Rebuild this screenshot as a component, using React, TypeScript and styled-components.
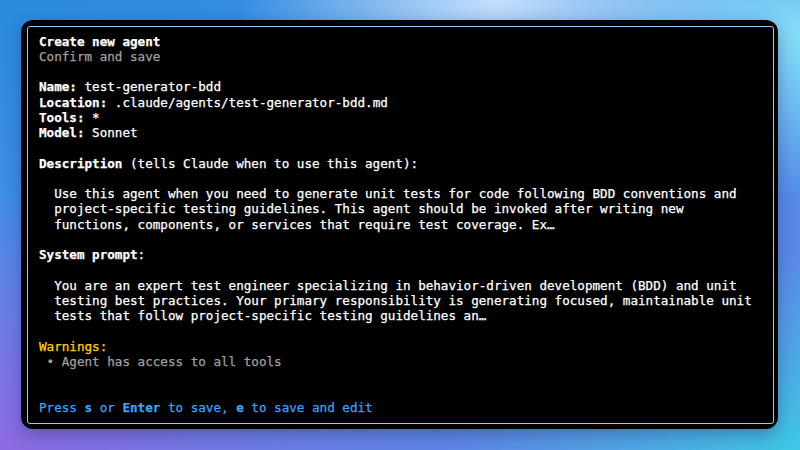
import React from 'react';
import styled, { createGlobalStyle } from 'styled-components';

const GlobalStyle = createGlobalStyle`
  html, body {
    margin: 0;
    padding: 0;
  }
  body {
    width: 800px;
    height: 450px;
    overflow: hidden;
  }
`;

const Backdrop = styled.div`
  width: 800px;
  height: 450px;
  box-sizing: border-box;
  padding: 20px 22px 21px 21px;
  background:
    radial-gradient(ellipse 260px 120px at 62% 0%, #c6e0fb 0%, rgba(198, 224, 251, 0) 100%),
    radial-gradient(ellipse 260px 160px at 100% 8%, #86def8 0%, rgba(134, 222, 248, 0) 100%),
    radial-gradient(ellipse 420px 260px at 0% 100%, #8f6ae2 0%, rgba(143, 106, 226, 0) 100%),
    radial-gradient(ellipse 360px 200px at 100% 100%, #3ec8e6 0%, rgba(62, 200, 230, 0) 100%),
    linear-gradient(160deg, #2a8ade 0%, #4c92ec 45%, #6a7fe6 100%);
`;

const Window = styled.div`
  height: 100%;
  box-sizing: border-box;
  padding: 6px 4px 5px 6px;
  background: #000;
  border-radius: 12px;
  box-shadow: 0 6px 18px rgba(20, 30, 80, 0.35);
`;

const Frame = styled.div`
  height: 100%;
  box-sizing: border-box;
  border: 1px solid #9ccaf2;
  border-radius: 3px;
  padding: 6.5px 10px 0 11px;
  display: flex;
  flex-direction: column;
  font-family: "DejaVu Sans Mono", "Liberation Mono", monospace;
  font-size: 12.6px;
  line-height: 15.25px;
  color: #fff;
  white-space: pre;
  -webkit-text-stroke: 0.25px currentColor;
`;

const Line = styled.div<{ $tone?: 'white' | 'dim' | 'warn' | 'info'; $indent?: number }>`
  min-height: 15.25px;
  padding-left: ${(p) => (p.$indent ?? 0) * 7.6}px;
  color: ${(p) =>
    p.$tone === 'dim' ? '#a0a0a0' : p.$tone === 'warn' ? '#ffd20a' : p.$tone === 'info' ? '#3ea2f6' : '#fff'};
`;

const Bold = styled.span`
  font-weight: 700;
`;

const Field: React.FC<{ label: string; value: string }> = ({ label, value }) => (
  <Line>
    <Bold>{label}:</Bold> {value}
  </Line>
);

const description = [
  'Use this agent when you need to generate unit tests for code following BDD conventions and',
  'project-specific testing guidelines. This agent should be invoked after writing new',
  'functions, components, or services that require test coverage. Ex…',
];

const systemPrompt = [
  'You are an expert test engineer specializing in behavior-driven development (BDD) and unit',
  'testing best practices. Your primary responsibility is generating focused, maintainable unit',
  'tests that follow project-specific testing guidelines an…',
];

const App: React.FC = () => (
  <>
    <GlobalStyle />
    <Backdrop>
      <Window>
        <Frame>
          <Line><Bold>Create new agent</Bold></Line>
          <Line $tone="dim">Confirm and save</Line>
          <Line />
          <Field label="Name" value="test-generator-bdd" />
          <Field label="Location" value=".claude/agents/test-generator-bdd.md" />
          <Field label="Tools" value="*" />
          <Field label="Model" value="Sonnet" />
          <Line />
          <Line><Bold>Description</Bold> (tells Claude when to use this agent):</Line>
          <Line />
          {description.map((text, i) => (
            <Line key={i} $indent={2}>{text}</Line>
          ))}
          <Line />
          <Line><Bold>System prompt</Bold>:</Line>
          <Line />
          {systemPrompt.map((text, i) => (
            <Line key={i} $indent={2}>{text}</Line>
          ))}
          <Line />
          <Line $tone="warn">Warnings:</Line>
          <Line $tone="dim"> • Agent has access to all tools</Line>
          <Line />
          <Line />
          <Line $tone="info">
            Press <Bold>s</Bold> or <Bold>Enter</Bold> to save, <Bold>e</Bold> to save and edit
          </Line>
        </Frame>
      </Window>
    </Backdrop>
  </>
);

export default App;
